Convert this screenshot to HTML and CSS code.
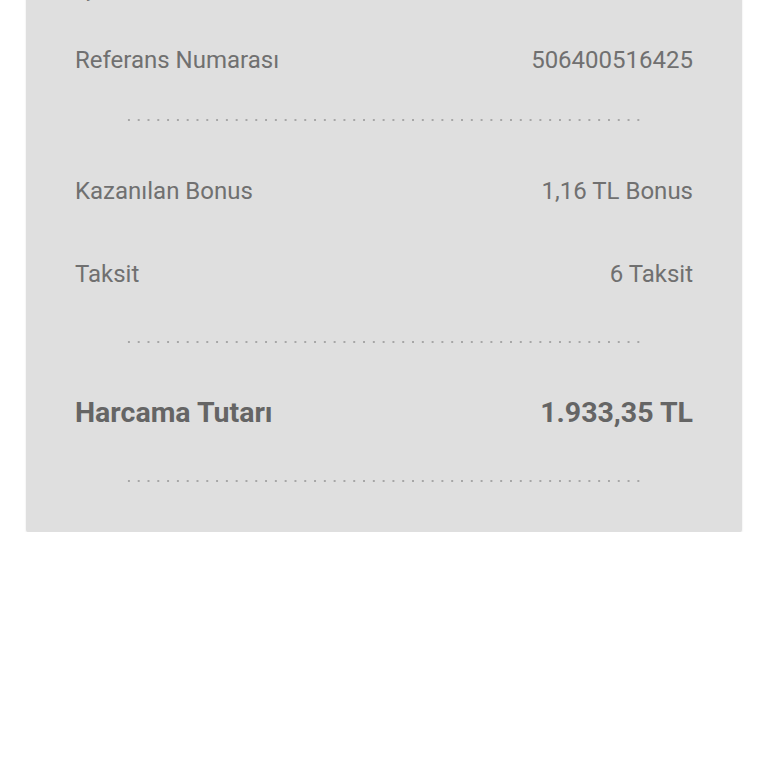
FILE: index.html
```html
<!DOCTYPE html>
<html lang="tr">
<head>
    <meta charset="UTF-8">
    <meta name="viewport" content="width=device-width, initial-scale=1.0">
    <title>Harcama Detayı</title>
    <link rel="stylesheet" href="styles.css">
</head>
<body>
    <div class="receipt">
        <div class="row row-prev">
            <span class="label">İşlem Tarihi</span>
        </div>

        <div class="row">
            <span class="label">Referans Numarası</span>
            <span class="value">506400516425</span>
        </div>
        <div class="dots dots-first"></div>

        <div class="row">
            <span class="label">Kazanılan Bonus</span>
            <span class="value">1,16 TL Bonus</span>
        </div>
        <div class="row">
            <span class="label">Taksit</span>
            <span class="value">6 Taksit</span>
        </div>
        <div class="dots"></div>

        <div class="row row-total">
            <span class="label">Harcama Tutarı</span>
            <span class="value">1.933,35 TL</span>
        </div>
        <div class="dots"></div>
    </div>
</body>
</html>
```

FILE: styles.css
```css
:root {
    --card-bg: #dfdfdf;
    --text: #707070;
    --dot: #a6a6a6;
}

body {
    margin: 0;
    background: #fff;
    font-family: Roboto, "Liberation Sans", sans-serif;
    color: var(--text);
    overflow: hidden;
}

.receipt {
    margin: -42px 26px 0;
    padding: 0 49px 50px;
    background: var(--card-bg);
    border-radius: 0 0 3px 3px;
    box-shadow: 0 1px 2px rgba(0, 0, 0, 0.12);
}

.row {
    height: 83px;
    display: flex;
    align-items: center;
    justify-content: space-between;
    font-size: 24px;
}

.row-prev {
    height: 60px;
}

.row-total {
    font-weight: bold;
    font-size: 28.5px;
    color: #656565;
}

/* dotted separator */
.dots {
    width: 520px;
    height: 2px;
    margin: 26px auto 28px;
    background-image: radial-gradient(circle, var(--dot) 1px, transparent 1.4px);
    background-size: 9.8px 2px;
}

.dots-first {
    margin-top: 18px;
}

.receipt .dots:last-child {
    margin-bottom: 0;
}
```
